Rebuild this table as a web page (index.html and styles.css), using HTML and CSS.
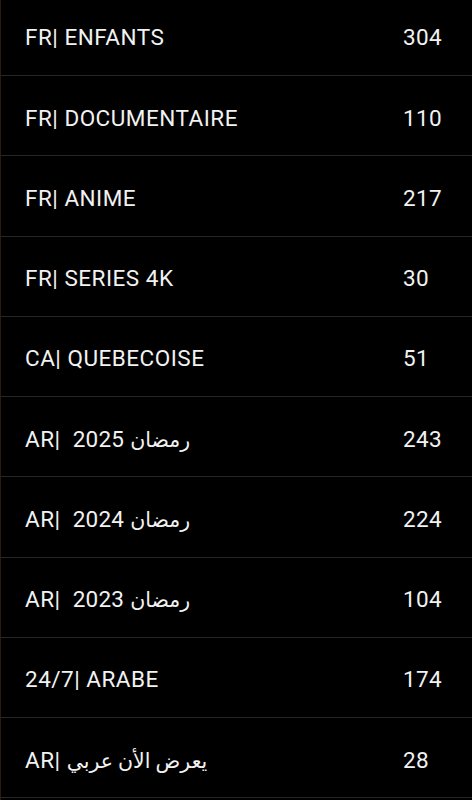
FILE: index.html
```html
<!DOCTYPE html>
<html lang="fr">
<head>
<meta charset="utf-8">
<title>Catégories</title>
<link rel="stylesheet" href="styles.css">
</head>
<body>
<div class="screen">
  <ul class="list">
    <li class="row"><span class="name">FR| ENFANTS</span><span class="count">304</span></li>
    <li class="row"><span class="name">FR| DOCUMENTAIRE</span><span class="count">110</span></li>
    <li class="row"><span class="name">FR| ANIME</span><span class="count">217</span></li>
    <li class="row"><span class="name">FR| SERIES 4K</span><span class="count">30</span></li>
    <li class="row"><span class="name">CA| QUEBECOISE</span><span class="count">51</span></li>
    <li class="row"><span class="name">AR|  <span class="num">2025</span> <span class="ar">رمضان</span></span><span class="count">243</span></li>
    <li class="row"><span class="name">AR|  <span class="num">2024</span> <span class="ar">رمضان</span></span><span class="count">224</span></li>
    <li class="row"><span class="name">AR|  <span class="num">2023</span> <span class="ar">رمضان</span></span><span class="count">104</span></li>
    <li class="row"><span class="name">24/7| ARABE</span><span class="count">174</span></li>
    <li class="row"><span class="name">AR| <span class="ar">يعرض الأن عربي</span></span><span class="count">28</span></li>
  </ul>
</div>
</body>
</html>
```
FILE: styles.css
```css
html, body {
  margin: 0;
  padding: 0;
  background: #000;
}
body {
  font-family: Roboto, "DejaVu Sans", sans-serif;
  color: #f2f2f2;
  width: 472px;
  height: 800px;
  overflow: hidden;
}
.screen {
  height: 800px;
  border-left: 1px solid #2b1a12;
  box-sizing: border-box;
  overflow: hidden;
}
.list {
  list-style: none;
  margin: -4.25px 0 0 0;
  padding: 0;
}
.row {
  display: flex;
  align-items: center;
  border-bottom: 1px solid #262626;
  padding-left: 24px;
  padding-top: 4px;
  box-sizing: content-box;
  height: 75.25px;
  font-size: 22.5px;
  letter-spacing: 0.5px;
}
.name {
  flex: 1;
  white-space: pre;
  direction: ltr;
  unicode-bidi: isolate;
}
.num {
  letter-spacing: 0.2px;
}
.ar {
  letter-spacing: 0;
  font-size: 20.5px;
  unicode-bidi: isolate;
}
.count {
  width: 69px;
  letter-spacing: 0.3px;
}
```
